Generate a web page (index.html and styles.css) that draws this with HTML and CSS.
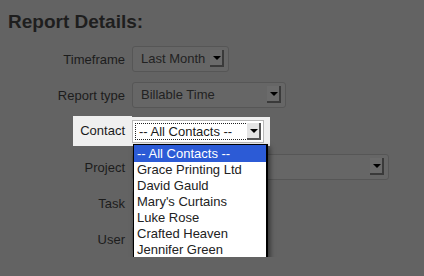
FILE: index.html
```html
<!DOCTYPE html>
<html>
<head>
    <title>Report Details</title>
    <link rel="stylesheet" href="styles.css">
</head>
<body>
    <div class="page">
        <h1>Report Details:</h1>

        <div class="form">
            <div class="row">
                <label>Timeframe</label>
                <div class="select w-time">Last Month<span class="arrow"></span></div>
            </div>
            <div class="row">
                <label>Report type</label>
                <div class="select w-type">Billable Time<span class="arrow"></span></div>
            </div>
            <div class="row focus">
                <label><span class="hl">Contact</span></label>
                <div class="hl-box">
                    <div class="select open">
                        <span class="focus-ring">-- All Contacts --</span><span class="arrow"></span>
                    </div>
                    <ul class="dropdown">
                        <li class="selected">-- All Contacts --</li>
                        <li>Grace Printing Ltd</li>
                        <li>David Gauld</li>
                        <li>Mary's Curtains</li>
                        <li>Luke Rose</li>
                        <li>Crafted Heaven</li>
                        <li>Jennifer Green</li>
                    </ul>
                </div>
            </div>
            <div class="row">
                <label>Project</label>
                <div class="select w-project"><span class="arrow"></span></div>
            </div>
            <div class="row">
                <label>Task</label>
                <div class="select w-small"><span class="arrow"></span></div>
            </div>
            <div class="row">
                <label>User</label>
                <div class="select w-small"><span class="arrow"></span></div>
            </div>
        </div>
    </div>
</body>
</html>
```

FILE: styles.css
```css
body { margin: 0; background: #636363; font-family: 'Liberation Sans', Arial, sans-serif; color: #1c1c1c; }
.page { padding: 11px 8px 0; }
h1 { margin: 0 0 8px; font-size: 19px; line-height: 22px; font-weight: bold; color: #1e1e1e; }

.row { display: grid; grid-template-columns: 124px auto; align-items: center; height: 36px; }
.row label { text-align: right; padding-right: 7px; font-size: 13px; }

.select {
    position: relative;
    box-sizing: border-box;
    height: 26px;
    padding-left: 8px;
    line-height: 24px;
    font-size: 13px;
    color: #222;
    background: #666;
    border: 1px solid #565656;
    border-radius: 3px;
}
.w-time { width: 97px; }
.w-type { width: 154px; }
.w-project { width: 257px; }
.w-small { width: 120px; }

.arrow {
    position: absolute;
    right: 4px;
    top: 3px;
    box-sizing: border-box;
    width: 14px;
    height: 17px;
    background: #6b6b6b;
    border-right: 2px solid #3a3a3a;
    border-bottom: 2px solid #3a3a3a;
}
.arrow::after {
    content: '';
    position: absolute;
    left: 3px;
    top: 6px;
    border-left: 4px solid transparent;
    border-right: 4px solid transparent;
    border-top: 4px solid #000;
}

/* highlighted row */
.hl { display: inline-block; padding: 7px 7px 8px; margin-right: -7px; background: #efefef; line-height: 15px; color: #1a1a1a; }
.hl-box { position: relative; width: 135px; padding: 3px 3px 3px 0; background: #efefef; }
.select.open {
    width: 132px;
    height: 23px;
    padding: 2px;
    line-height: 17px;
    background: #fff;
    border: 1px solid #b8b8b8;
    border-radius: 0;
    color: #1a1a1a;
}
.focus-ring { display: block; width: 114px; padding-left: 3px; border: 1px dotted #222; height: 15px; line-height: 15px; }
.select.open .arrow { top: 2px; right: 2px; width: 14px; height: 17px; background: #e4e4e4; border-right-color: #555; border-bottom-color: #555; }

.dropdown {
    position: absolute;
    left: 1px;
    top: 27px;
    z-index: 2;
    width: 135px;
    box-sizing: border-box;
    margin: 0;
    padding: 0 0 1px;
    list-style: none;
    background: #fff;
    border: 1px solid #000;
    border-right-width: 2px;
    border-bottom-width: 2px;
    box-shadow: 2px 3px 5px rgba(0, 0, 0, 0.5);
}
.dropdown li { padding-left: 3px; height: 16px; line-height: 16px; font-size: 13px; color: #222; white-space: nowrap; }
.dropdown li.selected { height: 17px; line-height: 17px; background: #2c5bd6; color: #fff; }
```
